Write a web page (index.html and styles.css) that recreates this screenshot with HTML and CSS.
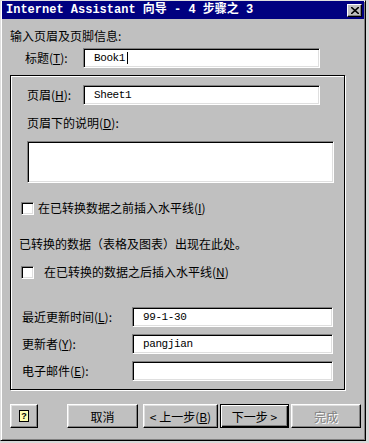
FILE: index.html
```html
<!DOCTYPE html>
<html>
<head>
    <title>Internet Assistant 向导</title>
    <link rel="stylesheet" href="styles.css">
</head>
<body>
    <div class="window">
        <div class="titlebar">
            <span class="title">Internet Assistant 向导 - 4 步骤之 3</span>
            <span class="close-btn">
                <svg width="8" height="7" viewBox="0 0 8 7">
                    <path d="M0 0 L8 7 M8 0 L0 7" stroke="#000" stroke-width="1.6"/>
                </svg>
            </span>
        </div>

        <div class="client">
            <p class="intro">输入页眉及页脚信息:</p>
            <div class="row title-row">
                <label class="lbl">标题(<u>T</u>):</label>
                <div class="field wide">Book1<span class="caret"></span></div>
            </div>

            <div class="frame">
                <div class="row header-row">
                    <label class="lbl">页眉(<u>H</u>):</label>
                    <div class="field wide">Sheet1</div>
                </div>
                <p class="desc-label">页眉下的说明(<u>D</u>):</p>
                <div class="field memo"></div>

                <div class="check check-before">
                    <span class="box"></span>
                    <span>在已转换数据之前插入水平线(<u>I</u>)</span>
                </div>
                <p class="static">已转换的数据（表格及图表）出现在此处。</p>
                <div class="check check-after">
                    <span class="box"></span>
                    <span class="spaced">在已转换的数据之后插入水平线(<u>N</u>)</span>
                </div>

                <div class="row info-row first">
                    <label class="lbl">最近更新时间(<u>L</u>):</label>
                    <div class="field info">99-1-30</div>
                </div>
                <div class="row info-row">
                    <label class="lbl">更新者(<u>Y</u>):</label>
                    <div class="field info">pangjian</div>
                </div>
                <div class="row info-row">
                    <label class="lbl">电子邮件(<u>E</u>):</label>
                    <div class="field info"></div>
                </div>
            </div>

            <div class="buttons">
                <button class="btn help"><span class="help-icon">?</span></button>
                <button class="btn cancel">取消</button>
                <button class="btn back">&lt; 上一步(<u>B</u>)</button>
                <button class="btn next default">下一步 &gt;</button>
                <button class="btn finish disabled">完成</button>
            </div>
        </div>
    </div>
</body>
</html>
```

FILE: styles.css
```css
* {
    box-sizing: border-box;
}

body {
    margin: 0;
    padding: 0;
    background: #d8d8d8;
    font-family: "Noto Sans CJK SC", sans-serif;
    font-size: 12px;
    color: #000;
}

p {
    margin: 0;
}

u {
    text-decoration: underline;
}

.window {
    width: 366px;
    height: 441px;
    background: #c0c0c0;
    border-top: 1px solid #dfdfdf;
    border-left: 1px solid #dfdfdf;
    border-right: 1px solid #000;
    border-bottom: 1px solid #000;
    box-shadow: inset 1px 1px #fff, inset -1px -1px #808080;
}

.titlebar {
    height: 18px;
    margin: 0 1px;
    background: #000080;
    display: flex;
    align-items: center;
    justify-content: space-between;
    padding: 0 2px 0 4px;
}

.title {
    color: #fff;
    font-family: "Liberation Mono", "Noto Sans CJK SC", monospace;
    font-weight: bold;
    font-size: 12px;
    line-height: 14px;
    white-space: pre;
}

.close-btn {
    width: 15px;
    height: 13px;
    background: #c0c0c0;
    border-top: 1px solid #fff;
    border-left: 1px solid #fff;
    border-right: 1px solid #000;
    border-bottom: 1px solid #000;
    box-shadow: inset -1px -1px #808080;
    display: flex;
    align-items: center;
    justify-content: center;
}

.client {
    padding: 10px 0 0 9px;
}

.intro {
    line-height: 14px;
}

.row {
    display: flex;
    align-items: center;
}

.lbl {
    line-height: 14px;
    white-space: nowrap;
}

.field {
    height: 20px;
    background: #fff;
    border-top: 1px solid #808080;
    border-left: 1px solid #808080;
    border-right: 1px solid #fff;
    border-bottom: 1px solid #fff;
    box-shadow: inset 1px 1px #000, inset -1px -1px #dfdfdf;
    padding-left: 10px;
    font-family: "Liberation Mono", monospace;
    font-size: 11px;
    letter-spacing: -0.4px;
    line-height: 18px;
    display: flex;
    align-items: center;
}

.title-row {
    margin-top: 5px;
    padding-left: 15px;
}

.title-row .lbl {
    width: 58px;
}

.field.wide {
    width: 237px;
}

.caret {
    display: inline-block;
    width: 1px;
    height: 12px;
    background: #000;
    margin-left: 2px;
}

.frame {
    width: 335px;
    margin-top: 7px;
    border: 1px solid #000;
    box-shadow: 1px 1px 0 #fff, inset 1px 1px 0 #fff;
    padding: 9px 0 8px 0;
}

.header-row {
    padding-left: 16px;
}

.header-row .lbl {
    width: 56px;
}

.desc-label {
    margin: 11px 0 0 16px;
    line-height: 14px;
}

.field.memo {
    width: 307px;
    height: 42px;
    margin: 11px 0 0 16px;
}

.check {
    display: flex;
    align-items: center;
    line-height: 14px;
    padding-left: 10px;
}

.check-before {
    margin-top: 18px;
}

.check-after {
    margin-top: 14px;
}

.box {
    width: 13px;
    height: 13px;
    margin-right: 4px;
    background: #fff;
    border-top: 1px solid #808080;
    border-left: 1px solid #808080;
    border-right: 1px solid #fff;
    border-bottom: 1px solid #fff;
    box-shadow: inset 1px 1px #000, inset -1px -1px #dfdfdf;
}

.spaced {
    margin-left: 6px;
}

.static {
    margin: 22px 0 0 8px;
    line-height: 14px;
}

.info-row {
    padding-left: 11px;
    margin-top: 7px;
}

.info-row.first {
    margin-top: 28px;
}

.info-row .lbl {
    width: 110px;
}

.field.info {
    width: 201px;
}

.buttons {
    display: flex;
    margin-top: 14px;
}

.btn {
    height: 24px;
    padding: 0;
    background: #c0c0c0;
    border-top: 1px solid #fff;
    border-left: 1px solid #fff;
    border-right: 1px solid #000;
    border-bottom: 1px solid #000;
    box-shadow: inset -1px -1px #808080, inset 1px 1px #dfdfdf;
    font-family: "Noto Sans CJK SC", sans-serif;
    font-size: 12px;
    color: #000;
    display: flex;
    align-items: center;
    justify-content: center;
}

.help {
    width: 28px;
}

.help-icon {
    width: 10px;
    height: 12px;
    border: 1px solid #000;
    background: #ffffb0;
    font-family: "Liberation Sans", sans-serif;
    font-weight: bold;
    font-size: 9px;
    line-height: 10px;
    text-align: center;
}

.cancel {
    width: 71px;
    margin-left: 29px;
}

.back {
    width: 75px;
    margin-left: 5px;
}

.next {
    width: 69px;
    margin-left: 2px;
}

.default {
    border: 1px solid #000;
    box-shadow: inset 1px 1px #fff, inset -1px -1px #000, inset -2px -2px #808080;
}

.finish {
    width: 70px;
    margin-left: 2px;
}

.disabled {
    color: #808080;
    text-shadow: 1px 1px 0 #fff;
}
```
